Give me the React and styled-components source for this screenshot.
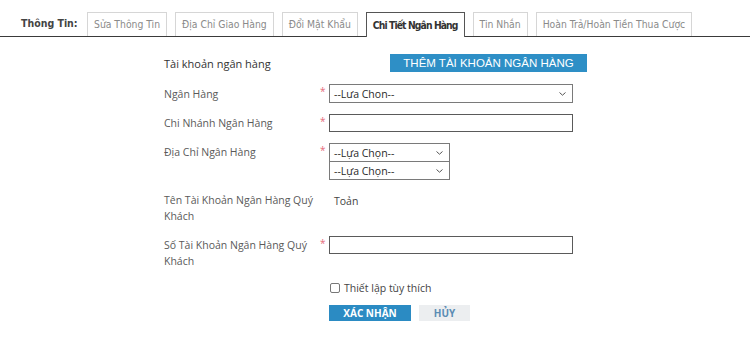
import React from 'react'
import styled, { createGlobalStyle } from 'styled-components'

const GlobalStyle = createGlobalStyle`
    html, body {
        margin: 0;
        padding: 0;
        background: #ffffff;
    }
    body {
        font-family: "Open Sans", "Noto Sans", sans-serif;
    }
`

const Page = styled.div`
    width: 750px;
    height: 352px;
    background: #fff;
    overflow: hidden;
`

const TabBar = styled.div`
    display: flex;
    align-items: flex-end;
    height: 36px;
    border-bottom: 1px solid #3a3a3a;
    font-family: "DejaVu Sans Condensed", "DejaVu Sans", sans-serif;
    font-size: 10.3px;
`

const TabLabel = styled.div`
    width: 66px;
    padding-left: 21px;
    height: 24px;
    line-height: 22px;
    font-size: 10.5px;
    font-weight: 700;
    color: #444;
`

const Tab = styled.div`
    height: ${({ active }) => (active ? '25px' : '24px')};
    line-height: ${({ active }) => (active ? '24px' : '22px')};
    padding: 0 6px;
    margin-right: 8px;
    border: 1px solid ${({ active }) => (active ? '#555' : '#d6d6d6')};
    border-bottom: none;
    background: #fff;
    color: ${({ active }) => (active ? '#333' : '#8a8a8a')};
    font-weight: ${({ active }) => (active ? 700 : 400)};
    letter-spacing: ${({ active }) => (active ? '-0.9px' : '0')};
    margin-bottom: ${({ active }) => (active ? '-1px' : '0')};
    box-sizing: border-box;
    white-space: nowrap;
`

const Form = styled.div`
    margin: 17px 0 0 164px;
    width: 424px;
    display: flex;
    flex-direction: column;
`

const HeaderRow = styled.div`
    display: flex;
    align-items: center;
    height: 18px;
    margin-bottom: 12px;
`

const HeaderTitle = styled.div`
    width: 226px;
    font-size: 11px;
    color: #333;
`

const AddButton = styled.div`
    width: 197px;
    height: 18px;
    line-height: 18px;
    background: #2e8fc6;
    color: #fff;
    font-family: "Liberation Sans", Arial, sans-serif;
    font-size: 11.5px;
    text-align: center;
`

const Row = styled.div`
    display: flex;
    align-items: flex-start;
    margin-bottom: ${({ gap }) => gap}px;
`

const Label = styled.div`
    width: 156px;
    flex-shrink: 0;
    padding-top: ${({ top }) => top || 0}px;
    font-size: 10.5px;
    line-height: 16px;
    color: #5a5a5a;
`

const Required = styled.span`
    width: 9px;
    flex-shrink: 0;
    color: #e56a7a;
    font-size: 10px;
    line-height: 10px;
    padding-top: 2px;
`

const Controls = styled.div`
    display: flex;
    flex-direction: column;
`

const SelectBox = styled.div`
    position: relative;
    width: ${({ w }) => w}px;
    height: ${({ h }) => h}px;
    box-sizing: border-box;
    border: 1px solid #7a7a7a;
    margin-top: ${({ joined }) => (joined ? '-1px' : '0')};
    background: #fff;
    display: flex;
    align-items: center;
    padding-left: 4px;
    font-size: 10.5px;
    color: #2a2a2a;
`

const Chevron = styled.svg`
    position: absolute;
    right: 6px;
    top: 50%;
    margin-top: -2px;
`

const TextInput = styled.div`
    width: ${({ w }) => w}px;
    height: ${({ h }) => h}px;
    box-sizing: border-box;
    border: 1px solid #5a5a5a;
    background: #fff;
`

const Value = styled.div`
    padding: 1px 0 0 14px;
    font-size: 10.5px;
    line-height: 16px;
    color: #444;
`

const CheckRow = styled.label`
    display: flex;
    align-items: center;
    gap: 4px;
    height: 14px;
    margin-left: 166px;
    margin-bottom: 10px;
    font-size: 10.5px;
    color: #444;
`

const Check = styled.span`
    width: 10px;
    height: 10px;
    box-sizing: border-box;
    border: 1px solid #777;
    border-radius: 2px;
    background: #fff;
`

const Actions = styled.div`
    display: flex;
    gap: 8px;
    margin-left: 165px;
`

const ActionButton = styled.div`
    width: ${({ w }) => w}px;
    height: 16px;
    line-height: 16px;
    text-align: center;
    font-size: 10px;
    font-weight: 700;
    background: ${({ primary }) => (primary ? '#2b8bc3' : '#eceef0')};
    color: ${({ primary }) => (primary ? '#fff' : '#5b8cb4')};
`

const ChevronIcon = () => (
    <Chevron width="7" height="4" viewBox="0 0 7 4">
        <path d="M0.5 0.5 L3.5 3.2 L6.5 0.5" fill="none" stroke="#555" strokeWidth="1" />
    </Chevron>
)

const Select = ({ w, h, text, joined }) => (
    <SelectBox w={w} h={h} joined={joined}>
        {text}
        <ChevronIcon />
    </SelectBox>
)

const tabs = [
    'Sửa Thông Tin',
    'Địa Chỉ Giao Hàng',
    'Đổi Mật Khẩu',
    'Chi Tiết Ngân Hàng',
    'Tin Nhắn',
    'Hoàn Trả/Hoàn Tiền Thua Cược',
]

const App = () => {
    return (
        <Page>
            <GlobalStyle />
            <TabBar>
                <TabLabel>Thông Tin:</TabLabel>
                {tabs.map((t, i) => (
                    <Tab key={i} active={i === 3}>{t}</Tab>
                ))}
            </TabBar>
            <Form>
                <HeaderRow>
                    <HeaderTitle>Tài khoản ngân hàng</HeaderTitle>
                    <AddButton>THÊM TÀI KHOẢN NGÂN HÀNG</AddButton>
                </HeaderRow>
                <Row gap={11}>
                    <Label top={2}>Ngân Hàng</Label>
                    <Required>*</Required>
                    <Select w={244} h={19} text="--Lưa Chon--" />
                </Row>
                <Row gap={11}>
                    <Label top={1}>Chi Nhánh Ngân Hàng</Label>
                    <Required>*</Required>
                    <TextInput w={244} h={18} />
                </Row>
                <Row gap={12}>
                    <Label top={1}>Địa Chỉ Ngân Hàng</Label>
                    <Required>*</Required>
                    <Controls>
                        <Select w={121} h={19} text="--Lựa Chọn--" />
                        <Select w={121} h={19} text="--Lựa Chọn--" joined />
                    </Controls>
                </Row>
                <Row gap={12}>
                    <Label>Tên Tài Khoản Ngân Hàng Quý Khách</Label>
                    <Value>Toản</Value>
                </Row>
                <Row gap={12}>
                    <Label top={1}>Số Tài Khoản Ngân Hàng Quý Khách</Label>
                    <Required>*</Required>
                    <TextInput w={244} h={18} />
                </Row>
                <CheckRow>
                    <Check />
                    Thiết lập tùy thích
                </CheckRow>
                <Actions>
                    <ActionButton primary w={82}>XÁC NHẬN</ActionButton>
                    <ActionButton w={51}>HỦY</ActionButton>
                </Actions>
            </Form>
        </Page>
    )
}

export default App
